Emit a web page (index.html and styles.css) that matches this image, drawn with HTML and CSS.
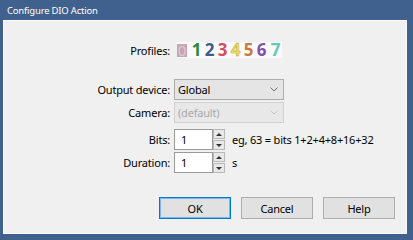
FILE: index.html
```html
<!DOCTYPE html>
<html lang="en">
<head>
  <meta charset="UTF-8">
  <title>Configure DIO Action</title>
  <link rel="stylesheet" href="styles.css">
</head>
<body>
  <div class="window">
    <div class="titlebar">Configure DIO Action</div>
    <div class="client">
      <div class="row row-profiles">
        <span class="label">Profiles:</span>
        <div class="profiles">
          <span class="p p0">0</span>
          <span class="p p1">1</span>
          <span class="p p2">2</span>
          <span class="p p3">3</span>
          <span class="p p4">4</span>
          <span class="p p5">5</span>
          <span class="p p6">6</span>
          <span class="p p7">7</span>
        </div>
      </div>
      <div class="row row-output">
        <span class="label">Output device:</span>
        <div class="select">
          <span class="select-text">Global</span>
          <svg class="chevron" width="8" height="5" viewBox="0 0 8 5"><polyline points="0.5,0.5 4,4 7.5,0.5" fill="none" stroke="currentColor" stroke-width="1"/></svg>
        </div>
      </div>
      <div class="row row-camera">
        <span class="label">Camera:</span>
        <div class="select disabled">
          <span class="select-text">(default)</span>
          <svg class="chevron" width="8" height="5" viewBox="0 0 8 5"><polyline points="0.5,0.5 4,4 7.5,0.5" fill="none" stroke="currentColor" stroke-width="1"/></svg>
        </div>
      </div>
      <div class="row row-bits">
        <span class="label">Bits:</span>
        <div class="spin">
          <span class="spin-field">1</span>
          <span class="spin-btns">
            <span class="spin-btn"><span class="arrow-up"></span></span>
            <span class="spin-btn"><span class="arrow-down"></span></span>
          </span>
        </div>
        <span class="hint">eg, 63 = bits 1+2+4+8+16+32</span>
      </div>
      <div class="row row-duration">
        <span class="label">Duration:</span>
        <div class="spin">
          <span class="spin-field">1</span>
          <span class="spin-btns">
            <span class="spin-btn"><span class="arrow-up"></span></span>
            <span class="spin-btn"><span class="arrow-down"></span></span>
          </span>
        </div>
        <span class="hint">s</span>
      </div>
      <div class="buttons">
        <button class="btn default">OK</button>
        <button class="btn">Cancel</button>
        <button class="btn">Help</button>
      </div>
    </div>
  </div>
</body>
</html>
```

FILE: styles.css
```css
body {
  margin: 0;
  padding: 0;
  font-family: 'Noto Sans', 'Open Sans', sans-serif;
  font-size: 11px;
  letter-spacing: -0.2px;
  color: #000;
  background-color: #40608e;
}
.window {
  width: 413px;
  height: 240px;
  box-sizing: border-box;
  padding: 0 6px 6px 3px;
  background-color: #40608e;
  display: flex;
  flex-direction: column;
}
.titlebar {
  height: 20px;
  line-height: 21px;
  padding-left: 4px;
  color: #fff;
  font-size: 9.5px;
}
.client {
  flex: 1;
  background-color: #f0f0f0;
  border: 1px solid #fbfbfb;
  display: flex;
  flex-direction: column;
}
.row {
  display: flex;
  align-items: center;
}
.label {
  width: 166px;
  text-align: right;
  margin-right: 4px;
}
.row-profiles {
  height: 18px;
  margin-top: 20px;
}
.row-output {
  margin-top: 20px;
}
.row-camera {
  margin-top: 2px;
}
.row-bits {
  margin-top: 6px;
}
.row-duration {
  margin-top: 2px;
}
.profiles {
  display: flex;
  align-items: center;
  margin-left: 3px;
  background-color: #fafafa;
  height: 16px;
  letter-spacing: 0;
}
.p {
  width: 13px;
  text-align: center;
  font-weight: 700;
  font-size: 17px;
  line-height: 16px;
}
.p0 {
  width: 10px;
  margin-right: 3px;
  background-color: #c6a7b1;
  color: #e0c8d0;
  font-weight: 400;
  font-size: 15px;
  line-height: 13px;
  height: 13px;
}
.p1 { color: #2e8b3a; }
.p2 { color: #3d5d8c; }
.p3 { color: #cf4f5f; }
.p4 { color: #e8d860; -webkit-text-stroke: 0.4px #b8a030; }
.p5 { color: #c77a42; }
.p6 { color: #7f52a8; }
.p7 { color: #66c8b8; margin-left: 1px; }
.select {
  width: 110px;
  height: 21px;
  box-sizing: border-box;
  border: 1px solid #acacac;
  background-color: #e5e5e5;
  display: flex;
  align-items: center;
  justify-content: space-between;
  padding: 0 5px 0 3px;
  color: #707070;
}
.select-text {
  color: #000;
}
.select.disabled {
  border-color: #d0d0d0;
  background-color: #e8e8e8;
  color: #c4c4c4;
}
.select.disabled .select-text {
  color: #a8a8a8;
}
.spin {
  display: flex;
  height: 21px;
}
.spin-field {
  width: 39px;
  box-sizing: border-box;
  border: 1px solid #9a9a9a;
  background-color: #fff;
  padding-left: 6px;
  line-height: 19px;
}
.spin-btns {
  display: flex;
  flex-direction: column;
  gap: 1px;
  width: 12px;
}
.spin-btn {
  flex: 1;
  box-sizing: border-box;
  border: 1px solid #b8b8b8;
  background-color: #e8e8e8;
  display: flex;
  align-items: center;
  justify-content: center;
}
.arrow-up {
  border-left: 3px solid transparent;
  border-right: 3px solid transparent;
  border-bottom: 3px solid #303030;
}
.arrow-down {
  border-left: 3px solid transparent;
  border-right: 3px solid transparent;
  border-top: 3px solid #303030;
}
.hint {
  margin-left: 7px;
}
.buttons {
  display: flex;
  justify-content: flex-end;
  gap: 10px;
  margin-top: 24px;
  padding-right: 11px;
}
.btn {
  width: 72px;
  height: 22px;
  font-family: inherit;
  font-size: 11px;
  letter-spacing: -0.2px;
  color: #000;
  background-color: #e1e1e1;
  border: 1px solid #adadad;
  padding: 0;
}
.btn.default {
  border-color: #0078d7;
  box-shadow: inset 0 0 0 1px #7fb6e6;
}
```
